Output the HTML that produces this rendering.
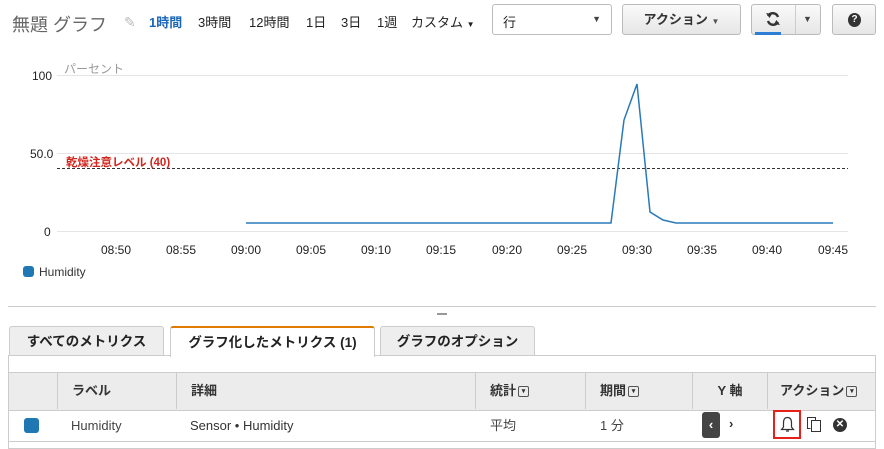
<!DOCTYPE html><html><head><meta charset="utf-8"><style>
body{margin:0;width:884px;height:449px;background:#fff;font-family:"Liberation Sans","Noto Sans CJK JP",sans-serif;position:relative;overflow:hidden;font-size:13px;color:#222}
.a{position:absolute;white-space:nowrap}
.btn{position:absolute;border:1px solid #bbb;border-radius:3px;background:linear-gradient(#fafafa,#e6e6e6);box-sizing:border-box}
.th{position:absolute;top:372px;height:37px;line-height:37px;font-weight:bold;color:#333;border-left:1px solid #ccc;box-sizing:border-box;padding-left:14px}
.td{position:absolute;top:410px;height:31px;line-height:31px;color:#444}
.tab{position:absolute;top:326px;height:30px;line-height:30px;border:1px solid #ccc;border-bottom:none;border-radius:3px 3px 0 0;background:#eee;font-weight:bold;font-size:13.5px;text-align:center;box-sizing:border-box}
.dd{display:inline-block;width:9px;height:9px;border:1px solid #555;border-radius:2px;vertical-align:middle;font-size:7px;line-height:9px;text-align:center;margin-left:2px}
</style></head><body>
<div class="a" style="left:12px;top:11px;font-size:18px;color:#666">無題 グラフ</div>
<div class="a" style="left:124px;top:14px;color:#bbb;font-size:14px">✎</div>
<div class="a" style="left:149px;top:12px;color:#1a66b8;font-weight:bold">1時間</div>
<div class="a" style="left:198px;top:12px">3時間</div>
<div class="a" style="left:249px;top:12px">12時間</div>
<div class="a" style="left:306px;top:12px">1日</div>
<div class="a" style="left:341px;top:12px">3日</div>
<div class="a" style="left:377px;top:12px">1週</div>
<div class="a" style="left:411px;top:12px">カスタム <span style="font-size:8px">▼</span></div>
<div class="a" style="left:492px;top:4px;width:120px;height:31px;border:1px solid #bbb;border-radius:3px;box-sizing:border-box"><span class="a" style="left:10px;top:7px">行</span><span class="a" style="right:10px;top:9px;font-size:9px;color:#444">▼</span></div>
<div class="btn" style="left:622px;top:4px;width:119px;height:31px;font-weight:bold;text-align:center;line-height:29px;color:#333">アクション <span style="font-size:8px;color:#555">▼</span></div>
<div class="btn" style="left:751px;top:4px;width:70px;height:31px">
<svg class="a" style="left:13px;top:6px" width="16" height="16"><path d="M13 6 A5.5 5.5 0 0 0 3 5 M3 10 A5.5 5.5 0 0 0 13 11" fill="none" stroke="#333" stroke-width="2.4"/><path d="M1 2 L4.5 7 L7 3 Z M15 14 L11.5 9 L9 13 Z" fill="#333"/></svg>
<span class="a" style="left:43px;top:0;width:1px;height:29px;background:#ccc"></span><span class="a" style="left:51px;top:9px;font-size:9px;color:#444">▼</span><span class="a" style="left:3px;top:27px;width:26px;height:3px;background:#2d7fd6"></span></div>
<div class="btn" style="left:832px;top:4px;width:44px;height:31px"><span class="a" style="left:15px;top:8px;width:13px;height:14px;border-radius:50%;background:#333;color:#fff;font-size:10px;font-weight:bold;text-align:center;line-height:14px">?</span></div>
<svg class="a" style="left:0;top:55px" width="884" height="240">
<g stroke="#e5e5e5" stroke-width="1"><line x1="57" y1="20.5" x2="848" y2="20.5"/><line x1="57" y1="98.5" x2="848" y2="98.5"/><line x1="57" y1="176.5" x2="848" y2="176.5"/></g>
<line x1="57" y1="113.5" x2="848" y2="113.5" stroke="#333" stroke-dasharray="3,2"/>
<g font-family="Liberation Sans" font-size="12" fill="#222"><text x="32" y="25">100</text><text x="30" y="103">50.0</text><text x="44" y="181">0</text></g>
<text x="64" y="18" font-size="12" fill="#999" font-family="Liberation Sans,Noto Sans CJK JP">パーセント</text>
<text x="66" y="111" font-size="11.5" fill="#d0261e" font-weight="bold" font-family="Liberation Sans,Noto Sans CJK JP">乾燥注意レベル (40)</text>
<polyline fill="none" stroke="#2a7ab8" stroke-width="1.5" points="246,168 611,168 624,65 637,29 650,157 663,165 676,168 833,168"/>
<g font-family="Liberation Sans" font-size="12" fill="#222" text-anchor="middle"><text x="116" y="199">08:50</text><text x="181" y="199">08:55</text><text x="246" y="199">09:00</text><text x="311" y="199">09:05</text><text x="376" y="199">09:10</text><text x="441" y="199">09:15</text><text x="507" y="199">09:20</text><text x="572" y="199">09:25</text><text x="637" y="199">09:30</text><text x="702" y="199">09:35</text><text x="767" y="199">09:40</text><text x="833" y="199">09:45</text></g>
<rect x="23" y="211" width="11" height="11" rx="3" fill="#1f77b4"/><text x="39" y="221" font-size="12" fill="#333" font-family="Liberation Sans">Humidity</text>
</svg>
<div class="a" style="left:8px;top:306px;width:868px;height:1px;background:#ccc"></div>
<div class="a" style="left:437px;top:313px;width:10px;height:2px;background:#999"></div>
<div class="tab" style="left:9px;width:155px">すべてのメトリクス</div>
<div class="tab" style="left:170px;width:205px;background:#fff;border-top:2px solid #e07b00;height:31px;z-index:2">グラフ化したメトリクス (1)</div>
<div class="tab" style="left:380px;width:155px">グラフのオプション</div>
<div class="a" style="left:8px;top:355px;width:868px;height:94px;border:1px solid #ccc;box-sizing:border-box"></div>
<div class="a" style="left:9px;top:372px;width:866px;height:37px;background:#ececec;border-top:1px solid #ccc;border-bottom:1px solid #ccc"></div>
<div class="th" style="left:57px;width:119px">ラベル</div>
<div class="th" style="left:176px;width:299px">詳細</div>
<div class="th" style="left:475px;width:110px">統計<span class="dd">▾</span></div>
<div class="th" style="left:585px;width:107px">期間<span class="dd">▾</span></div>
<div class="th" style="left:692px;width:75px;text-align:center;padding:0">Y 軸</div>
<div class="th" style="left:767px;width:108px;padding-left:12px">アクション<span class="dd">▾</span></div>
<div class="a" style="left:9px;top:441px;width:866px;height:1px;background:#ccc"></div>
<div class="a" style="left:24px;top:418px;width:15px;height:15px;border-radius:3px;background:#1f77b4"></div>
<div class="td" style="left:71px">Humidity</div>
<div class="td" style="left:190px;color:#333">Sensor • Humidity</div>
<div class="td" style="left:490px">平均</div>
<div class="td" style="left:600px">1 分</div>
<div class="a" style="left:702px;top:412px;width:18px;height:26px;background:#444;border-radius:3px;color:#fff;text-align:center;line-height:26px;font-weight:bold">‹</div>
<div class="a" style="left:729px;top:416px;font-weight:bold;color:#333">›</div>
<div class="a" style="left:773px;top:410px;width:28px;height:29px;border:2px solid #e8201a;box-sizing:border-box"></div>
<svg class="a" style="left:780px;top:416px" width="15" height="17"><path d="M7.5 1.5 C4 1.5 3.5 4.5 3.5 7 L3.5 11 L1.5 13.5 L13.5 13.5 L11.5 11 L11.5 7 C11.5 4.5 11 1.5 7.5 1.5 Z M6 15 h3" fill="none" stroke="#333" stroke-width="1.2"/></svg>
<svg class="a" style="left:806px;top:416px" width="16" height="17"><rect x="5.5" y="4.5" width="9" height="11" fill="#fff" stroke="#333"/><path d="M4.5 12.5 H1.5 V1.5 H9.5 V4" fill="none" stroke="#333"/></svg>
<div class="a" style="left:833px;top:418px;width:14px;height:14px;border-radius:50%;background:#333;color:#fff;font-size:10px;line-height:14px;text-align:center;font-weight:bold">✕</div>
</body></html>
